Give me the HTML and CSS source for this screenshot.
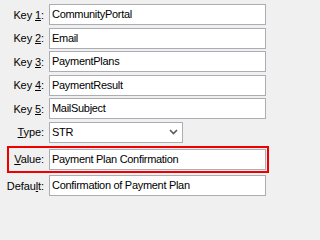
FILE: index.html
```html
<!DOCTYPE html>
<html>
<head>
<meta charset="utf-8">
<link rel="stylesheet" href="styles.css">
</head>
<body>
<form class="form">
  <div class="row">
    <label class="lbl">Key <u>1</u>:</label>
    <div class="field">CommunityPortal</div>
  </div>
  <div class="row">
    <label class="lbl">Key <u>2</u>:</label>
    <div class="field">Email</div>
  </div>
  <div class="row">
    <label class="lbl">Key <u>3</u>:</label>
    <div class="field">PaymentPlans</div>
  </div>
  <div class="row">
    <label class="lbl">Key <u>4</u>:</label>
    <div class="field">PaymentResult</div>
  </div>
  <div class="row">
    <label class="lbl">Key <u>5</u>:</label>
    <div class="field">MailSubject</div>
  </div>
  <div class="row">
    <label class="lbl"><u>T</u>ype:</label>
    <div class="field select">
      <span>STR</span>
      <svg class="chev" width="9" height="6" viewBox="0 0 9 6"><path d="M1 1 L4.5 4.5 L8 1" fill="none" stroke="#5a5a5a" stroke-width="1.6"/></svg>
    </div>
  </div>
  <div class="row row-hl">
    <label class="lbl"><u>V</u>alue:</label>
    <div class="field">Payment Plan Confirmation</div>
  </div>
  <div class="row">
    <label class="lbl">Defau<u>l</u>t:</label>
    <div class="field">Confirmation of Payment Plan</div>
  </div>
</form>
</body>
</html>
```
FILE: styles.css
```css
html, body {
  margin: 0;
  padding: 0;
  background: #f0f0f0;
}
body {
  width: 271px;
  height: 202px;
  overflow: hidden;
  font-family: "Liberation Sans", Arial, sans-serif;
  font-size: 11px;
  color: #000;
}
.form {
  display: flex;
  flex-direction: column;
  gap: 2.6px;
  padding-top: 4px;
}
.row {
  display: grid;
  grid-template-columns: 44px 217px;
  column-gap: 5px;
  align-items: center;
}
.lbl {
  text-align: right;
  white-space: nowrap;
  color: #000;
  letter-spacing: -0.1px;
}
.lbl u {
  text-decoration-thickness: 1px;
  text-underline-offset: 1px;
}
.field {
  box-sizing: border-box;
  height: 21px;
  border: 1px solid #abadb3;
  background: #fff;
  padding: 0 2px;
  line-height: 19px;
  white-space: nowrap;
  overflow: hidden;
  letter-spacing: -0.3px;
}
.select {
  width: 134px;
  display: flex;
  align-items: center;
  justify-content: space-between;
  padding-right: 4px;
}
.chev {
  display: block;
}
.row-hl {
  grid-template-columns: 34px 217px;
  border: 2px solid #ee0000;
  padding: 1px;
  margin-left: 7px;
  width: max-content;
}
```
